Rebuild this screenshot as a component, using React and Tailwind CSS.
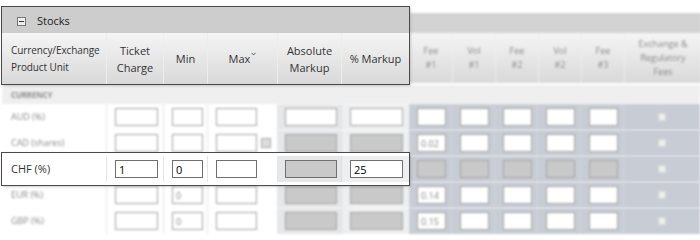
import clsx from 'clsx';

const leftCols = ['w-[105px]', 'w-[57px]', 'w-[44px]', 'w-[70px]', 'w-[64px]', 'w-[67px]'];
const feeHeads = [
  ['Fee', '#1'],
  ['Vol', '#1'],
  ['Fee', '#2'],
  ['Vol', '#2'],
  ['Fee', '#3'],
];

const rows = [
  { label: 'AUD (%)', fees: ['', '', '', '', ''] },
  { label: 'CAD (shares)', absOff: true, pctOff: true, check: true, fees: ['0.02', '', '', '', ''] },
  { label: 'CHF (%)', ticket: '1', min: '0', absOff: true, pct: '25', feesOff: true, highlight: true, fees: ['', '', '', '', ''] },
  { label: 'EUR (%)', min: '0', absOff: true, pctOff: true, fees: ['0.14', '', '', '', ''] },
  { label: 'GBP (%)', min: '0', absOff: true, pctOff: true, fees: ['0.15', '', '', '', ''] },
];

const Field = ({ width, value, off, sharp }) => (
  <div
    className={clsx(
      'h-[18px] border flex items-center px-[3px] leading-none',
      width,
      off ? 'bg-[#c9c9c9]' : 'bg-white',
      sharp ? 'border-[#6f6f6f] text-black text-[11px]' : 'border-[#a3a3a3] text-[#888] text-[9px]',
    )}
  >
    {value}
  </div>
);

const HeadCell = ({ className, children }) => (
  <div
    className={clsx(
      'h-full flex items-center justify-center text-center border-r border-r-[#ededed] bg-linear-to-b from-[#f5f5f5] to-[#d9d9d9]',
      className,
    )}
  >
    {children}
  </div>
);

const LeftCells = ({ row, sharp }) => (
  <>
    <div
      className={clsx(
        'h-full flex items-center pl-[9px] border-r border-r-[#e6e6e6]',
        leftCols[0],
        sharp ? 'text-[11px] text-[#333]' : 'text-[9px] text-[#8a8a8a]',
      )}
    >
      {row.label}
    </div>
    <div className={clsx('h-full flex items-center pl-[8px] border-r border-r-[#e6e6e6]', leftCols[1])}>
      <Field width="w-[43px]" value={row.ticket} sharp={sharp} />
    </div>
    <div className={clsx('h-full flex items-center pl-[8px] border-r border-r-[#e6e6e6]', leftCols[2])}>
      <Field width="w-[31px]" value={row.min} sharp={sharp} />
    </div>
    <div className={clsx('h-full flex items-center gap-[4px] pl-[8px] border-r border-r-[#e6e6e6]', leftCols[3])}>
      <Field width="w-[41px]" sharp={sharp} />
      {row.check && <div className="w-[10px] h-[10px] border border-[#aaa] bg-[#ddd]" />}
    </div>
    <div className={clsx('h-full flex items-center pl-[7px] border-r border-r-[#dcdcdc] bg-[#e6e7e9]', leftCols[4])}>
      <Field width="w-[52px]" off={row.absOff} sharp={sharp} />
    </div>
    <div className={clsx('h-full flex items-center pl-[8px] bg-[#eeeff0]', leftCols[5])}>
      <Field width="w-[53px]" value={row.pct} off={row.pctOff} sharp={sharp} />
    </div>
  </>
);

const FeeCells = ({ row }) => (
  <div className="flex h-full bg-[#c8ccd4] blur-[0.8px]">
    {row.fees.map((fee, i) => (
      <div key={i} className="w-[43px] h-full flex items-center pl-[8px] border-r border-r-[#d2d5db]">
        <Field width="w-[29px]" value={fee} off={row.feesOff} />
      </div>
    ))}
    <div className="w-[76px] h-full flex items-center justify-center">
      <div className="w-[8px] h-[8px] bg-[#eeeeee] border border-[#d5d5d5]" />
    </div>
  </div>
);

export default function App() {
  return (
    <div className="w-[700px] h-[237px] overflow-hidden bg-white pt-[7px] font-['Open_Sans','Liberation_Sans',sans-serif]">
      <div className="flex items-start">
        <div className="relative z-10 ml-[2px] w-[407px] outline outline-[#4a4a4a] shadow-[1px_1px_3px_rgba(0,0,0,0.35)]">
          <div className="h-[26px] bg-[#cdcdcd] flex items-center gap-[11px] pl-[15px] pt-[3px]">
            <div className="w-[9px] h-[9px] border border-[#777] bg-[#eee] flex items-center justify-center">
              <div className="w-[5px] h-px bg-[#333]" />
            </div>
            <span className="text-[11px] text-[#222]">Stocks</span>
          </div>
          <div className="flex h-[51px] text-[11px] leading-[17px] text-[#333]">
            <HeadCell className={clsx(leftCols[0], 'justify-start text-left pl-[9px] text-[10px] tracking-[-0.1px]')}>
              Currency/Exchange
              <br />
              Product Unit
            </HeadCell>
            <HeadCell className={leftCols[1]}>
              Ticket
              <br />
              Charge
            </HeadCell>
            <HeadCell className={leftCols[2]}>Min</HeadCell>
            <HeadCell className={leftCols[3]}>
              <span>Max</span>
              <svg width="5" height="4" viewBox="0 0 5 4" className="ml-px -mt-[9px]">
                <path d="M0.5 0.8 L2.5 3 L4.5 0.8" fill="none" stroke="#555" strokeWidth="0.9" />
              </svg>
            </HeadCell>
            <HeadCell className={leftCols[4]}>
              Absolute
              <br />
              Markup
            </HeadCell>
            <HeadCell className={clsx(leftCols[5], 'border-r-0')}>% Markup</HeadCell>
          </div>
        </div>
        <div className="flex-1 mt-[6px] ml-px blur-[0.8px]">
          <div className="h-[20px] bg-[#d3d3d3]" />
          <div className="flex h-[50px] text-[9px] leading-[14px] text-[#888]">
            {feeHeads.map(([a, b], i) => (
              <HeadCell key={i} className="w-[43px]">
                {a}
                <br />
                {b}
              </HeadCell>
            ))}
            <HeadCell className="w-[76px] border-r-0">
              Exchange &amp;
              <br />
              Regulatory
              <br />
              Fees
            </HeadCell>
          </div>
        </div>
      </div>

      <div className="h-[19px] mt-px ml-[2px] bg-[#efefef] flex items-center pl-[9px] blur-[0.8px]">
        <span className="text-[8px] font-bold text-[#8f8f8f] tracking-tight">CURRENCY</span>
      </div>

      {rows.map(row =>
        row.highlight ? (
          <div key={row.label} className="flex h-[26px] ml-[2px]">
            <div className="relative z-10 -my-[3px] py-[3px] flex w-[407px] h-[32px] bg-white outline outline-[#4a4a4a] shadow-[1px_1px_3px_rgba(0,0,0,0.35)]">
              <LeftCells row={row} sharp />
            </div>
            <FeeCells row={row} />
          </div>
        ) : (
          <div key={row.label} className="flex h-[26px] ml-[2px]">
            <div className="flex w-[407px] h-full blur-[0.8px]">
              <LeftCells row={row} />
            </div>
            <FeeCells row={row} />
          </div>
        ),
      )}
    </div>
  );
}
